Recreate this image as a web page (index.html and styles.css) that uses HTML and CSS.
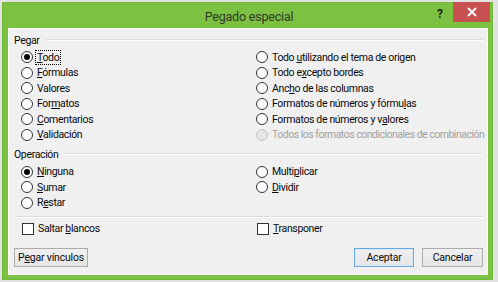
FILE: index.html
```html
<!DOCTYPE html>
<html lang="es">
<head>
    <meta charset="UTF-8">
    <title>Pegado especial</title>
    <link rel="stylesheet" href="styles.css">
</head>
<body>
    <div class="window">
        <div class="titlebar">
            <span class="tb-spacer"></span>
            <span class="title">Pegado especial</span>
            <div class="tb-controls">
                <span class="help">?</span>
                <span class="close">
                    <svg width="10" height="10" viewBox="0 0 10 10"><path d="M1 1L9 9M9 1L1 9" stroke="#fff" stroke-width="1.8"/></svg>
                </span>
            </div>
        </div>
        <div class="content">
            <div class="group-head"><span>Pegar</span></div>
            <div class="options paste">
                <label class="opt"><span class="radio checked"></span><span class="focus"><u>T</u>odo</span></label>
                <label class="opt"><span class="radio"></span><span><u>F</u>órmulas</span></label>
                <label class="opt"><span class="radio"></span><span>Valores</span></label>
                <label class="opt"><span class="radio"></span><span>For<u>m</u>atos</span></label>
                <label class="opt"><span class="radio"></span><span><u>C</u>omentarios</span></label>
                <label class="opt"><span class="radio"></span><span><u>V</u>alidación</span></label>
                <label class="opt"><span class="radio"></span><span>Todo <u>u</u>tilizando el tema de origen</span></label>
                <label class="opt"><span class="radio"></span><span>Todo e<u>x</u>cepto bordes</span></label>
                <label class="opt"><span class="radio"></span><span>Anc<u>h</u>o de las columnas</span></label>
                <label class="opt"><span class="radio"></span><span>Formatos de números y fórmu<u>l</u>as</span></label>
                <label class="opt"><span class="radio"></span><span>Formatos de números y v<u>a</u>lores</span></label>
                <label class="opt disabled"><span class="radio"></span><span>Todos los formatos condicionales de combinación</span></label>
            </div>
            <div class="group-head op-head"><span>Operación</span></div>
            <div class="options operation">
                <label class="opt"><span class="radio checked"></span><span><u>N</u>inguna</span></label>
                <label class="opt"><span class="radio"></span><span><u>S</u>umar</span></label>
                <label class="opt"><span class="radio"></span><span>R<u>e</u>star</span></label>
                <label class="opt"><span class="radio"></span><span>Multi<u>p</u>licar</span></label>
                <label class="opt"><span class="radio"></span><span><u>D</u>ividir</span></label>
            </div>
            <div class="separator"></div>
            <div class="options checks">
                <label class="opt"><span class="check"></span><span>Saltar <u>b</u>lancos</span></label>
                <label class="opt"><span class="check"></span><span><u>T</u>ransponer</span></label>
            </div>
            <div class="buttons">
                <button class="btn links">P<u>e</u>gar vínculos</button>
                <span class="btn-spacer"></span>
                <button class="btn default">Aceptar</button>
                <button class="btn">Cancelar</button>
            </div>
        </div>
    </div>
</body>
</html>
```

FILE: styles.css
```css
body { margin: 0; background: #e2e2e2; font-family: Roboto, "Liberation Sans", sans-serif; width: 498px; height: 282px; overflow: hidden; }
u { text-decoration-thickness: 1px; text-underline-offset: 1px; }

.window { margin: 2px 0 0 2px; width: 491px; height: 278px; box-sizing: border-box; background: #7cc142; border: 1px solid #72b83b; padding: 0 4px 4px 5px; display: flex; flex-direction: column; }

.titlebar { height: 25px; display: flex; align-items: flex-start; }
.tb-spacer { width: 58px; }
.title { flex: 1; text-align: center; font-size: 12.5px; letter-spacing: -0.2px; color: #2e3a26; line-height: 25px; padding-top: 1px; }
.tb-controls { width: 58px; display: flex; align-items: flex-start; justify-content: flex-end; margin-right: -2px; margin-top: -1px; }
.help { font-size: 12px; font-weight: bold; color: #222; line-height: 24px; margin-right: 10px; }
.close { width: 37px; height: 20px; background: #c75050; display: flex; align-items: center; justify-content: center; }

.content { flex: 1; background: #f0f0f0; border: 1px solid #f9f9f9; padding: 0 4px 0 5px; font-size: 10.5px; letter-spacing: -0.35px; color: #0a0a0a; display: flex; flex-direction: column; }

.group-head { display: flex; align-items: center; height: 14px; margin-top: 4px; }
.group-head::after { content: ""; flex: 1; height: 0; border-top: 1px solid #dcdcdc; border-bottom: 1px solid #fff; margin-left: 6px; }
.op-head { margin-top: 4.5px; }

.options { display: grid; grid-auto-flow: column; grid-template-columns: 235px 1fr; padding-left: 7px; }
.paste { grid-template-rows: repeat(6, 15.5px); margin-top: 2.5px; }
.operation { grid-template-rows: repeat(3, 15.5px); margin-top: 3px; }
.checks { grid-template-rows: 15.5px; margin-top: 3px; }

.opt { display: flex; align-items: center; gap: 4px; white-space: nowrap; }
.radio { width: 10px; height: 10px; border: 1px solid #333; border-radius: 50%; background: #fff; display: flex; align-items: center; justify-content: center; }
.radio.checked::after { content: ""; width: 6px; height: 6px; border-radius: 50%; background: #000; }
.disabled { color: #a0a0a0; letter-spacing: -0.5px; }
.disabled .radio { border-color: #c4c4c4; background: #e6e6e6; }
.check { width: 10px; height: 10px; border: 1px solid #333; background: #fff; margin-left: 1px; }
.focus { outline: 1px dotted #000; outline-offset: 0; padding: 0 1px; margin-left: -1px; }

.separator { margin-top: 5.5px; border-top: 1px solid #dcdcdc; border-bottom: 1px solid #fff; }

.buttons { display: flex; gap: 8px; margin-top: 11px; }
.btn-spacer { flex: 1; }
.btn { height: 19px; padding: 0; font-family: inherit; font-size: 10.5px; letter-spacing: -0.2px; color: #0a0a0a; white-space: nowrap; background: linear-gradient(#f0f0f0, #e5e5e5); border: 1px solid #acacac; }
.links { width: 74px; }
.default { width: 60px; border-color: #6aa7e4; box-shadow: inset 0 0 0 1px #d7e8f8; }
.buttons .btn:last-child { width: 61px; }
```
